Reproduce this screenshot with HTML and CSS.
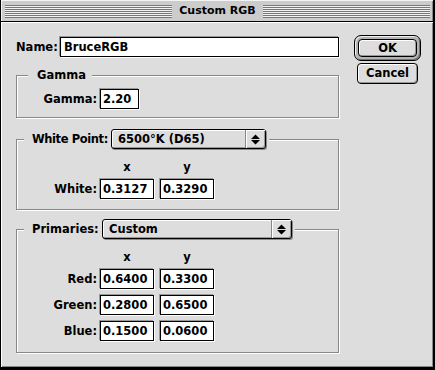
FILE: index.html
```html
<!DOCTYPE html>
<html lang="en">
<head>
    <meta charset="UTF-8">
    <title>Custom RGB</title>
    <link rel="stylesheet" href="styles.css">
</head>
<body>
    <div class="window">
        <div class="titlebar">
            <div class="stripes"></div>
            <div class="title">Custom RGB</div>
            <div class="stripes"></div>
        </div>
        <div class="content">
            <div class="main">
                <div class="name-row">
                    <span class="name-label">Name:</span>
                    <div class="field field-name">BruceRGB</div>
                </div>

                <fieldset class="group group-gamma">
                    <legend class="legend-text">Gamma</legend>
                    <div class="gamma-row">
                        <span class="row-label">Gamma:</span>
                        <div class="field field-gamma">2.20</div>
                    </div>
                </fieldset>

                <fieldset class="group group-white">
                    <legend class="legend-popup">
                        <span class="popup-label label-white">White Point:</span>
                        <div class="popup popup-white">
                            <span class="popup-text">6500°K (D65)</span>
                            <span class="popup-arrows">
                                <svg width="9" height="11" viewBox="0 0 9 11"><path d="M0 5 L4.5 0.5 L9 5 Z M0 6 L4.5 10.5 L9 6 Z" fill="#000"/></svg>
                            </span>
                        </div>
                    </legend>
                    <div class="coords">
                        <span></span><span class="hdr">x</span><span class="hdr">y</span>
                        <span class="row-label">White:</span>
                        <div class="field">0.3127</div>
                        <div class="field">0.3290</div>
                    </div>
                </fieldset>

                <fieldset class="group group-primaries">
                    <legend class="legend-popup">
                        <span class="popup-label label-primaries">Primaries:</span>
                        <div class="popup popup-primaries">
                            <span class="popup-text">Custom</span>
                            <span class="popup-arrows">
                                <svg width="9" height="11" viewBox="0 0 9 11"><path d="M0 5 L4.5 0.5 L9 5 Z M0 6 L4.5 10.5 L9 6 Z" fill="#000"/></svg>
                            </span>
                        </div>
                    </legend>
                    <div class="coords">
                        <span></span><span class="hdr">x</span><span class="hdr">y</span>
                        <span class="row-label">Red:</span>
                        <div class="field">0.6400</div>
                        <div class="field">0.3300</div>
                        <span class="row-label">Green:</span>
                        <div class="field">0.2800</div>
                        <div class="field">0.6500</div>
                        <span class="row-label">Blue:</span>
                        <div class="field">0.1500</div>
                        <div class="field">0.0600</div>
                    </div>
                </fieldset>
            </div>

            <div class="side">
                <div class="btn-ring">
                    <div class="btn btn-ok">OK</div>
                </div>
                <div class="btn btn-cancel">Cancel</div>
            </div>
        </div>
    </div>
</body>
</html>
```

FILE: styles.css
```css
body {
    margin: 0;
    font-family: "DejaVu Sans", "Liberation Sans", sans-serif;
    font-size: 11.5px;
    font-weight: bold;
    color: #000;
    background: #dddddd;
}

.window {
    width: 435px;
    height: 370px;
    box-sizing: border-box;
    border: 0 solid #000;
    border-width: 0 2px 3px 1px;
    background: #dddddd;
    display: flex;
    flex-direction: column;
}

/* title bar */
.titlebar {
    height: 21px;
    border-bottom: 1px solid #000;
    background: #cccccc;
    box-shadow: inset 1px 1px 0 #f4f4f4, inset -1px 0 0 #888;
    display: flex;
    align-items: center;
    gap: 5px;
    padding: 0 3px 0 4px;
}

.stripes {
    flex: 1;
    height: 13px;
    margin-top: 1px;
    background: repeating-linear-gradient(#777 0 1px, #f2f2f2 1px 2px);
}

.title {
    font-size: 11px;
    line-height: 14px;
    padding: 0 2px;
}

/* dialog body */
.content {
    flex: 1;
    display: flex;
    align-items: flex-start;
    padding: 13px 0 0 15px;
    box-shadow: inset 1px 1px 0 #fff, inset -1px -1px 0 #888;
}

.main {
    width: 323px;
    padding-top: 2px;
}

.name-row {
    display: flex;
    align-items: center;
    height: 20px;
}

.name-label {
    width: 44px;
    white-space: nowrap;
}

.field {
    box-sizing: border-box;
    height: 20px;
    width: 54px;
    border: 1px solid #000;
    background: #fff;
    box-shadow: -1px -1px 0 #999, 1px 1px 0 #fff;
    padding: 0 2px;
    line-height: 18px;
    white-space: nowrap;
    overflow: hidden;
}

.field-name {
    flex: 1;
    width: auto;
    padding-left: 3px;
}

.field-gamma {
    width: 39px;
}

.row-label {
    width: 80px;
    padding-right: 3px;
    text-align: right;
    white-space: nowrap;
}

/* group boxes */
.group {
    margin: 0;
    padding: 0;
    min-width: 0;
    border: 1px solid #888;
    box-shadow: inset 1px 1px 0 #fff, 1px 1px 0 #fff;
}

.group-gamma {
    margin-top: 11px;
}

.group-white {
    margin-top: 11px;
}

.group-primaries {
    margin-top: 9px;
}

.legend-text {
    line-height: 14px;
    margin-left: 11px;
    padding: 0 6px 0 9px;
    background: #dddddd;
}

.legend-popup {
    display: flex;
    align-items: center;
    margin-left: 7px;
    padding: 0 3px 0 8px;
    background: #dddddd;
}

.gamma-row {
    display: flex;
    align-items: center;
    margin: 7px 0 8px;
}

.coords {
    display: grid;
    grid-template-columns: 83px 60px 54px;
    row-gap: 6px;
    align-items: center;
    padding: 12px 0 10px;
}

.group-primaries .coords {
    padding-bottom: 11px;
}

.hdr {
    width: 54px;
    line-height: 12px;
    text-align: center;
}

/* popup menus */
.popup-label {
    display: inline-block;
    white-space: nowrap;
}

.label-white {
    width: 79px;
    letter-spacing: -0.4px;
}

.label-primaries {
    width: 70px;
}

.popup {
    box-sizing: border-box;
    height: 20px;
    display: flex;
    border: 1px solid #000;
    border-radius: 3px;
    background: #dddddd;
    box-shadow: inset 1px 1px 0 #fff, inset -1px -1px 0 #999, 1px 1px 0 #888;
}

.popup-white {
    width: 155px;
}

.popup-primaries {
    width: 190px;
}

.popup-text {
    flex: 1;
    padding-left: 6px;
    line-height: 18px;
    white-space: nowrap;
}

.popup-arrows {
    width: 19px;
    display: flex;
    align-items: center;
    justify-content: center;
    border-left: 1px solid #888;
    box-shadow: inset 1px 1px 0 #fff;
}

/* buttons */
.side {
    margin-left: 15px;
    width: 67px;
}

.btn-ring {
    border: 1px solid #000;
    border-radius: 7px;
    padding: 3px;
    background: #b4b4b4;
    box-shadow: inset 1px 1px 0 #eee, inset -1px -1px 0 #777;
}

.btn {
    box-sizing: border-box;
    border: 1px solid #000;
    border-radius: 4px;
    background: #dddddd;
    box-shadow: inset 1px 1px 0 #fff, inset -1px -1px 0 #999;
    text-align: center;
}

.btn-ok {
    height: 18px;
    line-height: 16px;
}

.btn-cancel {
    height: 21px;
    line-height: 19px;
    margin: 2px 3px 0;
}
```
